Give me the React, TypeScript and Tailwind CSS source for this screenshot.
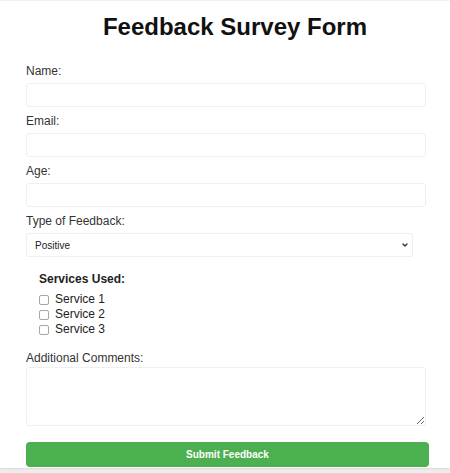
import { ChevronDown } from "lucide-react";

const fields = [
  { id: "name", label: "Name:", type: "text" },
  { id: "email", label: "Email:", type: "email" },
  { id: "age", label: "Age:", type: "number" },
];

const services = ["Service 1", "Service 2", "Service 3"];

export default function App() {
  return (
    <div className="min-h-[473px] bg-[#ededed] font-['Liberation_Sans',Arial,sans-serif]">
      <div className="bg-white border-t border-[#f2f2f2] pt-[12px] pb-px pl-[26px] pr-[21px] shadow-[0_1px_2px_rgba(0,0,0,0.08)]">
        <h1 className="text-center text-[24px] leading-[28px] font-bold text-[#111] mb-[23px] pl-[15px]">
          Feedback Survey Form
        </h1>

        <form onSubmit={(e) => e.preventDefault()}>
          {fields.map((f) => (
            <div key={f.id} className="mb-[7px]">
              <label htmlFor={f.id} className="block text-[12px] leading-[15px] text-[#333] mb-1">
                {f.label}
              </label>
              <input
                id={f.id}
                type={f.type}
                className="block w-[400px] h-6 border border-[#efefef] rounded-[3px] bg-white outline-none"
              />
            </div>
          ))}

          <div className="mb-[7px]">
            <label htmlFor="type" className="block text-[12px] leading-[15px] text-[#333] mb-1">
              Type of Feedback:
            </label>
            <div className="relative w-[387px]">
              <select
                id="type"
                className="block w-full h-6 appearance-none border border-[#efefef] rounded-[2px] bg-white pl-[8px] text-[10px] text-[#222] outline-none"
              >
                <option>Positive</option>
                <option>Neutral</option>
                <option>Negative</option>
              </select>
              <ChevronDown
                className="absolute right-[4px] top-[8px] w-[8px] h-[8px] text-[#333] pointer-events-none"
                strokeWidth={4}
              />
            </div>
          </div>

          <div className="pl-[13px] pt-[8px] mb-[14px]">
            <div className="text-[12px] leading-[15px] font-bold text-[#222] mb-[5px]">Services Used:</div>
            {services.map((s) => (
              <label key={s} className="flex items-center gap-[6px] text-[12px] leading-[15px] text-[#222]">
                <input
                  type="checkbox"
                  className="appearance-none w-[10px] h-[10px] border border-[#a6a6a6] rounded-[2px] bg-white"
                />
                {s}
              </label>
            ))}
          </div>

          <div className="mb-[15px]">
            <label htmlFor="comments" className="block text-[12px] leading-[15px] text-[#333] mb-[1px]">
              Additional Comments:
            </label>
            <textarea
              id="comments"
              className="block w-[400px] h-[59px] border border-[#efefef] rounded-[3px] bg-white outline-none"
            />
          </div>

          <button
            type="submit"
            className="w-full h-[25px] rounded-[4px] bg-[#4caf50] text-white text-[10px] font-bold"
          >
            Submit Feedback
          </button>
        </form>
      </div>
    </div>
  );
}
